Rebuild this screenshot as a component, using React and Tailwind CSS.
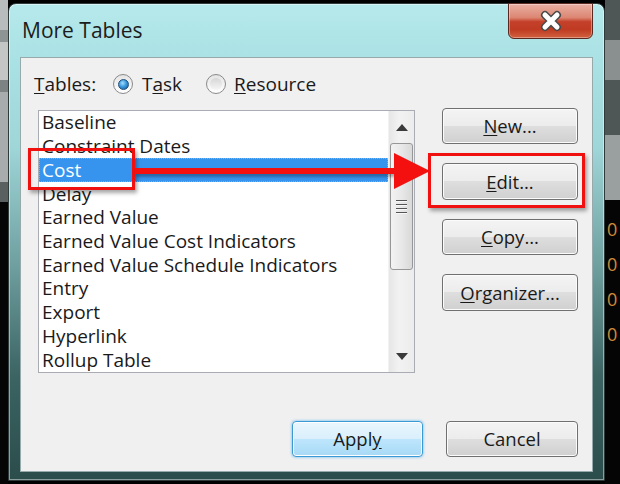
import React from "react";

const items = [
  "Baseline",
  "Constraint Dates",
  "Cost",
  "Delay",
  "Earned Value",
  "Earned Value Cost Indicators",
  "Earned Value Schedule Indicators",
  "Entry",
  "Export",
  "Hyperlink",
  "Rollup Table",
];

function Btn({ children, primary, className = "" }) {
  const look = primary
    ? "border-[#3a9ad6] bg-[linear-gradient(to_bottom,#eaf6fd_0%,#d9f0fc_49%,#bee6fd_50%,#a7d9f5_100%)] shadow-[inset_0_0_0_1px_#ffffff,0_0_3px_#5ab4ee]"
    : "border-[#707070] bg-[linear-gradient(to_bottom,#f4f4f4_0%,#ececec_49%,#dedede_50%,#d0d0d0_100%)] shadow-[inset_0_0_0_1px_#fbfbfb]";
  return (
    <div
      className={`flex items-center justify-center rounded-[4px] border text-[18.5px] text-[#1a1a1a] ${look} ${className}`}
    >
      <span>{children}</span>
    </div>
  );
}

function Radio({ checked }) {
  return (
    <div className="flex h-[20px] w-[20px] items-center justify-center rounded-full border border-[#8a8a8a] bg-[linear-gradient(to_bottom,#e4e4e4,#ffffff)]">
      {checked ? (
        <div className="h-[11px] w-[11px] rounded-full border border-[#1f4f7a] bg-[radial-gradient(circle_at_40%_35%,#a6dcff_0%,#3a9be0_45%,#0d4f8c_100%)]" />
      ) : (
        <div className="h-[12px] w-[12px] rounded-full bg-[linear-gradient(to_bottom,#d6d6d6,#f6f6f6)]" />
      )}
    </div>
  );
}

function ScrollArrow({ up }) {
  return (
    <svg width="12" height="7" viewBox="0 0 12 7">
      <path
        d={up ? "M0 7 L6 0 L12 7 Z" : "M0 0 L6 7 L12 0 Z"}
        fill="#3a3a3a"
      />
    </svg>
  );
}

export default function App() {
  return (
    <div className="flex h-[484px] w-[620px] overflow-hidden bg-black font-['Open_Sans','Liberation_Sans',sans-serif]">
      {/* desktop behind, left edge */}
      <div className="flex w-[8px] flex-col">
        <div className="h-[30px] bg-[#b9bcbc]" />
        <div className="h-[12px] bg-[#8e9393]" />
        <div className="h-[38px] bg-[#c4c6c6]" />
        <div className="h-[12px] bg-[#7d8282]" />
        <div className="h-[90px] bg-[#a9acac]" />
        <div className="h-[20px] bg-[#5a5f5f]" />
        <div className="flex-1 bg-[#050505]" />
      </div>

      {/* window */}
      <div className="mt-[3px] flex h-[478px] w-[597px] flex-col rounded-t-[8px] border border-[#2f3b3b] bg-[linear-gradient(to_bottom,#b6e9eb_0%,#a8e0e3_14%,#9fd6d8_30%,#6f9f9f_55%,#3b6463_78%,#2b4d4b_100%)] px-[11px] pb-[8px] shadow-[inset_0_0_0_1px_rgba(255,255,255,0.45)]">
        {/* title bar */}
        <div className="flex h-[53px] items-start justify-between">
          <div className="ml-[2px] mt-[16px] text-[21px] leading-none text-[#1c1c1c]">
            More Tables
          </div>
          <div className="-mt-px flex h-[36px] w-[85px] items-center justify-center rounded-b-[6px] border border-[#5a2a22] bg-[linear-gradient(to_bottom,#e9b0a3_0%,#dc8672_40%,#c4402a_52%,#bf3b22_75%,#d3613f_100%)] shadow-[inset_0_0_0_1px_rgba(255,255,255,0.35)]">
            <svg width="30" height="24" viewBox="0 0 30 24">
              <path d="M9 6 L21 18 M21 6 L9 18" stroke="#4a4a4a" strokeWidth="8" strokeLinecap="round" />
              <path d="M9 6 L21 18 M21 6 L9 18" stroke="#ffffff" strokeWidth="5" strokeLinecap="round" />
            </svg>
          </div>
        </div>

        {/* client area */}
        <div className="relative flex flex-1 flex-col border border-[#96aaab] bg-[#f0f0f0] pl-[17px] pr-[14px] pt-[12px] text-[19px] text-[#1a1a1a]">
          <div className="flex h-[28px] items-center">
            <span className="-ml-[4px] w-[79px]">
              <u className="underline-offset-2">T</u>ables:
            </span>
            <Radio checked />
            <span className="ml-[9px] w-[64px]">
              T<u className="underline-offset-2">a</u>sk
            </span>
            <Radio />
            <span className="ml-[8px]">
              <u className="underline-offset-2">R</u>esource
            </span>
          </div>

          <div className="mt-[12px] flex">
            {/* list box */}
            <div className="flex h-[263px] w-[377px] border border-[#a9adb3] bg-white">
              <div className="flex flex-1 flex-col">
                {items.map((name) =>
                  name === "Cost" ? (
                    <div
                      key={name}
                      className="flex h-[24px] items-center border border-dotted border-[#e0a050] bg-[#3794ee] pl-[2px] leading-none text-white"
                    >
                      {name}
                    </div>
                  ) : (
                    <div key={name} className="flex h-[24px] items-center pl-[3px] leading-none">
                      {name}
                    </div>
                  )
                )}
              </div>
              <div className="flex w-[26px] flex-col border-l border-[#f2f2f2] bg-[linear-gradient(to_right,#e6e6e6,#f2f2f2_40%,#ececec)]">
                <div className="flex h-[32px] items-center justify-center">
                  <ScrollArrow up />
                </div>
                <div className="mx-px flex h-[127px] items-center justify-center rounded-[3px] border border-[#979797] bg-[linear-gradient(to_right,#f3f3f3,#e8e8e8_50%,#d9d9d9)]">
                  <div className="flex flex-col gap-[2px]">
                    <div className="h-[2px] w-[11px] border-b border-[#f8f8f8] bg-[#555]" />
                    <div className="h-[2px] w-[11px] border-b border-[#f8f8f8] bg-[#555]" />
                    <div className="h-[2px] w-[11px] border-b border-[#f8f8f8] bg-[#555]" />
                    <div className="h-[2px] w-[11px] border-b border-[#f8f8f8] bg-[#555]" />
                  </div>
                </div>
                <div className="flex-1" />
                <div className="flex h-[32px] items-center justify-center">
                  <ScrollArrow />
                </div>
              </div>
            </div>

            {/* side buttons */}
            <div className="-mt-[2px] ml-[27px] flex w-[136px] flex-col gap-[19px]">
              <Btn className="h-[36px]">
                <u className="underline-offset-2">N</u>ew...
              </Btn>
              <Btn className="h-[37px]">
                <u className="underline-offset-2">E</u>dit...
              </Btn>
              <Btn className="h-[36px]">
                <u className="underline-offset-2">C</u>opy...
              </Btn>
              <Btn className="h-[37px]">
                <u className="underline-offset-2">O</u>rganizer...
              </Btn>
            </div>
          </div>

          <div className="mt-[48px] flex justify-end gap-[23px]">
            <Btn primary className="h-[36px] w-[131px]">
              Appl<u className="underline-offset-2">y</u>
            </Btn>
            <Btn className="h-[36px] w-[132px]">Cancel</Btn>
          </div>

          {/* annotations drawn over the dialog */}
          <div className="absolute left-[7px] top-[90px] h-[42px] w-[107px] border-[3px] border-[#f01010] shadow-[2px_3px_4px_rgba(0,0,0,0.35)]" />
          <div className="absolute left-[114px] top-[110px] h-[6px] w-[262px] bg-[#f51010] shadow-[1px_3px_3px_rgba(0,0,0,0.3)]" />
          <svg className="absolute left-[373px] top-[95px]" width="37" height="36" viewBox="0 0 37 36">
            <path d="M0 0 L36 18 L0 36 Z" fill="#f51010" />
          </svg>
          <div className="absolute left-[407px] top-[95px] h-[55px] w-[157px] border-[3px] border-[#f01010] shadow-[2px_3px_4px_rgba(0,0,0,0.35)]" />
        </div>
      </div>

      {/* desktop behind, right edge */}
      <div className="flex w-[15px] flex-col overflow-hidden">
        <div className="h-[40px] bg-[#4e5656]" />
        <div className="h-[40px] bg-[#8a9090]" />
        <div className="h-[55px] bg-[#4f5656]" />
        <div className="h-[65px] bg-[#9aa0a0]" />
        <div className="flex flex-1 flex-col bg-[#050505] pl-[2px] pt-[12px] text-[18px] leading-[35px] text-[#d08a3a]">
          <span>0</span>
          <span>0</span>
          <span>0</span>
          <span>0</span>
        </div>
      </div>
    </div>
  );
}
